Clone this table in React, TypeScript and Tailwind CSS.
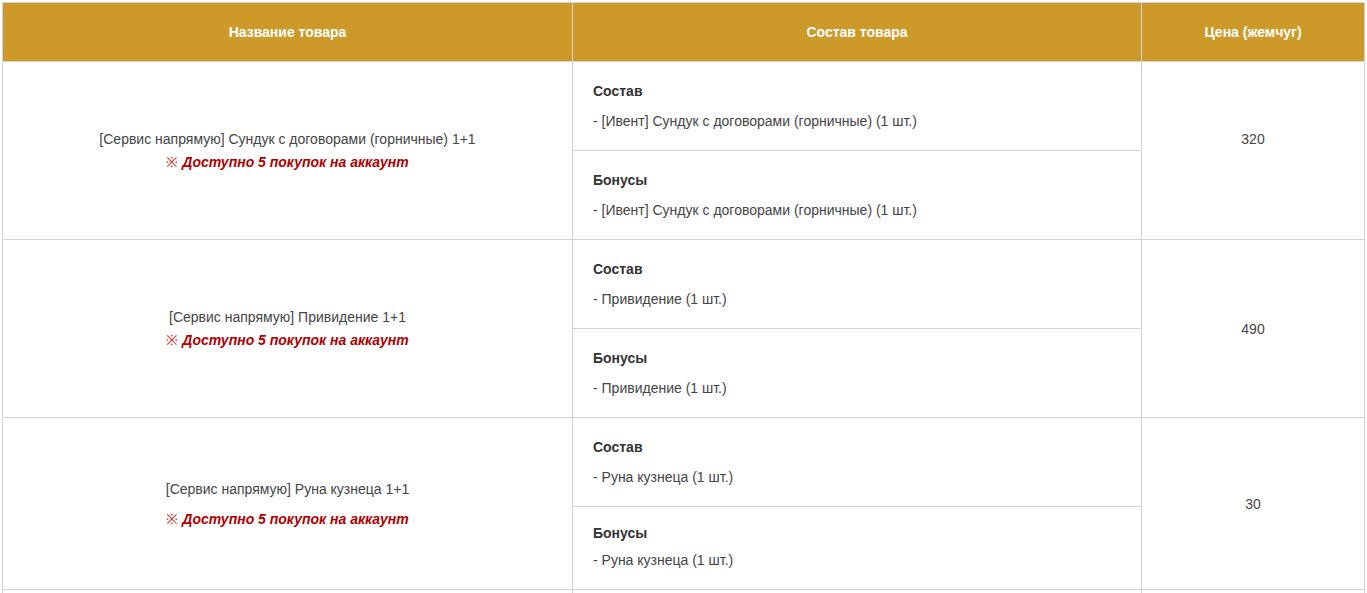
import React from 'react'

type Item = {
  name: string
  main: string
  bonus: string
  price: string
  nameGap: string
  priceShift: string
  bonusPad: string
  bonusGap: string
}

const items: Item[] = [
  {
    name: '[Сервис напрямую] Сундук с договорами (горничные) 1+1',
    main: '- [Ивент] Сундук с договорами (горничные) (1 шт.)',
    bonus: '- [Ивент] Сундук с договорами (горничные) (1 шт.)',
    price: '320',
    nameGap: 'gap-[3px]',
    priceShift: 'pb-[22px]',
    bonusPad: 'pt-[19px] pb-[19px]',
    bonusGap: 'gap-[10px]',
  },
  {
    name: '[Сервис напрямую] Привидение 1+1',
    main: '- Привидение (1 шт.)',
    bonus: '- Привидение (1 шт.)',
    price: '490',
    nameGap: 'gap-[3px]',
    priceShift: 'pt-[2px]',
    bonusPad: 'pt-[19px] pb-[19px]',
    bonusGap: 'gap-[10px]',
  },
  {
    name: '[Сервис напрямую] Руна кузнеца 1+1',
    main: '- Руна кузнеца (1 шт.)',
    bonus: '- Руна кузнеца (1 шт.)',
    price: '30',
    nameGap: 'gap-[10px]',
    priceShift: 'pt-[2px]',
    bonusPad: 'pt-[16px] pb-[19px]',
    bonusGap: 'gap-[7px]',
  },
]

const ProductRow = ({ item }: { item: Item }) => {
  return (
    <div className="grid grid-cols-[570px_569px_223px]">
      <div className={`flex flex-col items-center justify-center border-r border-b border-[#d2d2d2] ${item.nameGap}`}>
        <p className="leading-[20px] text-[#444]">{item.name}</p>
        <p className="leading-[20px]">
          <span className="text-[#c0392b]">※ </span>
          <span className="font-bold italic text-[#b00000]">Доступно 5 покупок на аккаунт</span>
        </p>
      </div>

      <div className="flex flex-col border-r border-b border-[#d2d2d2]">
        <div className="flex flex-col gap-[10px] border-b border-[#d2d2d2] pl-[20px] pt-[19px] pb-[19px]">
          <span className="font-bold leading-[20px] text-[#333]">Состав</span>
          <span className="leading-[20px] text-[#444]">{item.main}</span>
        </div>
        <div className={`flex flex-col pl-[20px] ${item.bonusPad} ${item.bonusGap}`}>
          <span className="font-bold leading-[20px] text-[#333]">Бонусы</span>
          <span className="leading-[20px] text-[#444]">{item.bonus}</span>
        </div>
      </div>

      <div className={`flex items-center justify-center border-r border-b border-[#d2d2d2] text-[#444] ${item.priceShift}`}>
        {item.price}
      </div>
    </div>
  )
}

const App = () => {
  return (
    <div className="min-h-screen bg-white p-[2px] text-[14px] font-['Liberation_Sans',Arial,sans-serif]">
      <div className="w-[1363px] border-l border-t border-[#d2d2d2]">
        <div className="grid h-[59px] grid-cols-[570px_569px_223px] bg-[#cd9a29] font-bold text-white">
          <div className="flex items-center justify-center border-r border-b border-[#d2d2d2]">Название товара</div>
          <div className="flex items-center justify-center border-r border-b border-[#d2d2d2]">Состав товара</div>
          <div className="flex items-center justify-center border-r border-b border-[#d2d2d2]">Цена (жемчуг)</div>
        </div>

        {items.map((item, i) => (
          <ProductRow key={i} item={item} />
        ))}

        <div className="grid h-[60px] grid-cols-[570px_569px_223px]">
          <div className="border-r border-[#d2d2d2]" />
          <div className="border-r border-[#d2d2d2]" />
          <div className="border-r border-[#d2d2d2]" />
        </div>
      </div>
    </div>
  )
}

export default App
